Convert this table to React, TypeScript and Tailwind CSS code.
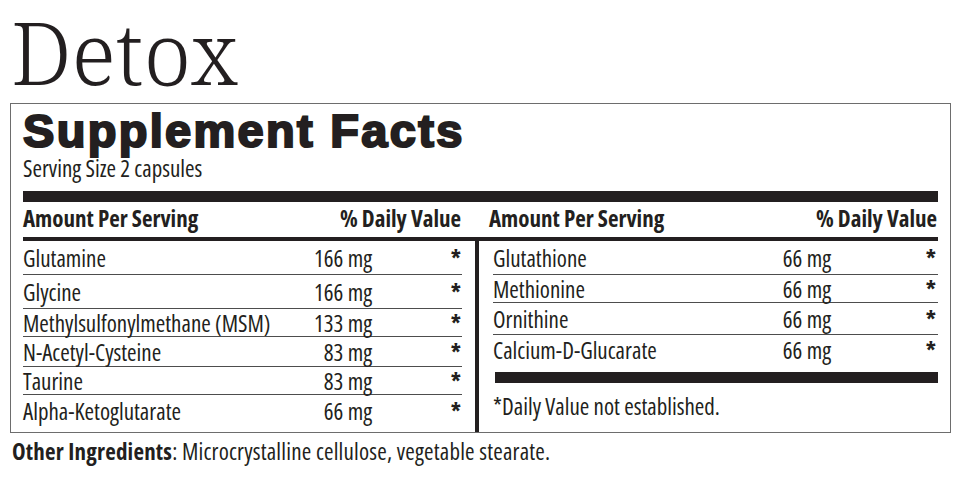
type Row = {
  name: string;
  amount: string;
  height: string;
};

const LEFT_ROWS: Row[] = [
  { name: "Glutamine", amount: "166 mg", height: "h-[34px] border-b" },
  { name: "Glycine", amount: "166 mg", height: "h-[34px] border-b" },
  { name: "Methylsulfonylmethane (MSM)", amount: "133 mg", height: "h-[28px] border-b" },
  { name: "N-Acetyl-Cysteine", amount: "83 mg", height: "h-[30px] border-b" },
  { name: "Taurine", amount: "83 mg", height: "h-[28px] border-b" },
  { name: "Alpha-Ketoglutarate", amount: "66 mg", height: "h-[31px]" },
];

const RIGHT_ROWS: Row[] = [
  { name: "Glutathione", amount: "66 mg", height: "h-[34px] border-b" },
  { name: "Methionine", amount: "66 mg", height: "h-[28px] border-b" },
  { name: "Ornithine", amount: "66 mg", height: "h-[32px] border-b" },
  { name: "Calcium-D-Glucarate", amount: "66 mg", height: "h-[30px]" },
];

export default function App() {
  return (
    <div className="w-[970px] h-[501px] bg-white text-[#231f20] overflow-hidden">
      {/* Product name */}
      <h1 className="ml-[11px] mt-[4px] font-['Noto_Serif','Liberation_Serif',serif] font-[350] text-[86px] leading-[96px]">
        Detox
      </h1>

      {/* Facts panel */}
      <div className="ml-[10px] mt-[3px] w-[941px] h-[330px] border border-[#6d6d6d] px-[12px] pt-[7px] flex flex-col font-['Open_Sans',sans-serif] [font-stretch:75%] font-medium text-[23px] leading-[24px]">
        <h2 className="font-['Liberation_Sans',Arial,sans-serif] [font-stretch:100%] font-bold text-[47px] leading-[40px] tracking-[2.3px] [-webkit-text-stroke:2.2px_#231f20]">
          Supplement Facts
        </h2>
        <p className="mt-[5px]">Serving Size 2 capsules</p>

        <div className="mt-[11px] h-[11px] bg-[#231f20]" />

        {/* Column headings */}
        <div className="mt-[4px] flex font-bold">
          <div className="w-[452px] pr-[14px] flex justify-between">
            <span>Amount Per Serving</span>
            <span>% Daily Value</span>
          </div>
          <div className="flex-1 pl-[14px] pr-[1px] flex justify-between">
            <span>Amount Per Serving</span>
            <span>% Daily Value</span>
          </div>
        </div>
        <div className="mt-[7px] h-[4px] bg-[#231f20]" />

        {/* Body */}
        <div className="flex flex-1">
          <div className="w-[452px] pr-[13px]">
            {LEFT_ROWS.map((row) => (
              <div
                key={row.name}
                className={`${row.height} border-[#4d4d4d] grid grid-cols-[276px_73px_1fr] items-center`}
              >
                <span>{row.name}</span>
                <span className="text-right">{row.amount}</span>
                <span className="text-right pr-[1px] font-bold">*</span>
              </div>
            ))}
          </div>

          <div className="w-[4px] bg-[#231f20]" />

          <div className="flex-1 pl-[14px]">
            {RIGHT_ROWS.map((row) => (
              <div
                key={row.name}
                className={`${row.height} border-[#4d4d4d] grid grid-cols-[265px_73px_1fr] items-center`}
              >
                <span>{row.name}</span>
                <span className="text-right">{row.amount}</span>
                <span className="text-right pr-[2px] font-bold">*</span>
              </div>
            ))}
            <div className="ml-[2px] mt-[7px] h-[11px] bg-[#231f20]" />
            <p className="mt-[11px]">*Daily Value not established.</p>
          </div>
        </div>
      </div>

      {/* Other ingredients */}
      <p className="ml-[12px] mt-[6px] font-['Open_Sans',sans-serif] [font-stretch:75%] font-medium text-[23px] leading-[24px] tracking-[0.2px]">
        <span className="font-bold">Other Ingredients</span>: Microcrystalline cellulose, vegetable stearate.
      </p>
    </div>
  );
}
